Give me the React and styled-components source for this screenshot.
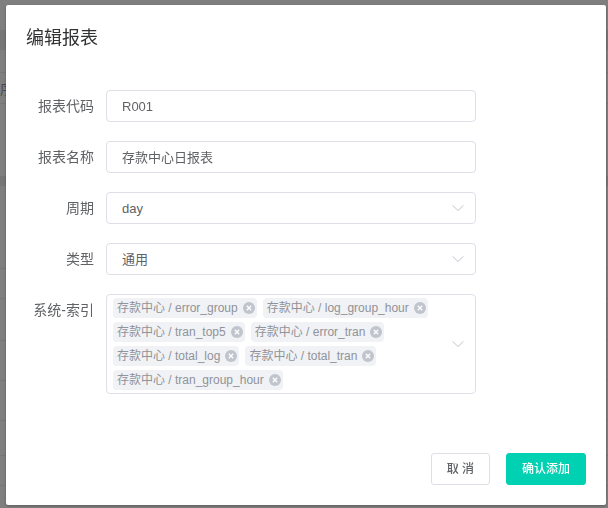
import React from "react";
import styled, { createGlobalStyle } from "styled-components";

const GlobalStyle = createGlobalStyle`
  html, body { margin: 0; padding: 0; }
  body {
    width: 608px;
    height: 508px;
    overflow: hidden;
    background: #ffffff;
    font-family: "Liberation Sans", "Noto Sans CJK SC", sans-serif;
  }
`;

/* ---------- background page (under the overlay) ---------- */
const Page = styled.div`
  display: flex;
  flex-direction: column;
  width: 608px;
  height: 508px;
  background: #ffffff;
`;

const PageRow = styled.div`
  height: ${(p) => p.$h}px;
  box-sizing: border-box;
  background: ${(p) => (p.$band ? "#ececec" : "transparent")};
  border-bottom: ${(p) => (p.$line ? "1px solid #ebeef5" : "none")};
  display: flex;
  align-items: center;
  font-size: 14px;
  color: #909399;
`;

const pageRows = [
  { h: 30 },
  { h: 20, band: true },
  { h: 23, line: true },
  { h: 31, line: true, text: "序号" },
  { h: 72 },
  { h: 10, band: true },
  { h: 83, line: true },
  { h: 30, line: true },
  { h: 42, line: true },
  { h: 40, line: true },
  { h: 40, line: true },
  { h: 35, line: true },
  { h: 30, line: true },
];

/* ---------- overlay & dialog ---------- */
const Overlay = styled.div`
  position: fixed;
  inset: 0;
  background: rgba(0, 0, 0, 0.5);
  display: flex;
  align-items: flex-start;
  padding: 5px 0 0 6px;
  box-sizing: border-box;
`;

const Dialog = styled.div`
  width: 600px;
  background: #ffffff;
  border-radius: 2px;
  box-shadow: 0 1px 3px rgba(0, 0, 0, 0.3);
  display: flex;
  flex-direction: column;
`;

const Header = styled.div`
  padding: 20px 20px 10px;
  height: 25px;
  display: flex;
  align-items: center;
`;

const Title = styled.span`
  font-size: 18px;
  line-height: 24px;
  color: #303133;
`;

const Body = styled.div`
  padding: 30px 20px;
`;

const FormItem = styled.div`
  display: flex;
  align-items: flex-start;
  margin-bottom: 19px;
`;

const Label = styled.label`
  width: 80px;
  height: 32px;
  box-sizing: border-box;
  padding-right: 12px;
  display: flex;
  align-items: center;
  justify-content: flex-end;
  font-size: 14px;
  line-height: 16px;
  color: #606266;
  flex-shrink: 0;
`;

const Field = styled.div`
  position: relative;
  width: 370px;
  height: 32px;
  box-sizing: border-box;
  border: 1px solid #dcdfe6;
  border-radius: 4px;
  padding: 0 30px 0 15px;
  display: flex;
  align-items: center;
  font-size: 13px;
  line-height: 15px;
  color: #606266;
  background: #ffffff;
`;

const MultiField = styled.div`
  position: relative;
  width: 370px;
  box-sizing: border-box;
  border: 1px solid #dcdfe6;
  border-radius: 4px;
  padding: 1px 30px 1px 0;
  display: flex;
  flex-wrap: wrap;
  align-content: flex-start;
  background: #ffffff;
`;

const Arrow = styled.span`
  position: absolute;
  right: 11px;
  top: 50%;
  transform: translateY(-50%);
  display: flex;
  width: 12px;
  height: 7px;
`;

const Tag = styled.span`
  display: inline-flex;
  align-items: center;
  height: 20px;
  margin: 2px 0 2px 6px;
  padding: 0 2px 0 4px;
  box-sizing: border-box;
  background: #f0f2f5;
  border-radius: 4px;
  font-size: 12px;
  line-height: 14px;
  color: #909399;
  white-space: nowrap;
`;

const TagClose = styled.span`
  display: inline-flex;
  margin-left: 5px;
  width: 12px;
  height: 12px;
`;

const Footer = styled.div`
  padding: 10px 20px 20px;
  display: flex;
  justify-content: flex-end;
  gap: 16px;
`;

const Button = styled.button`
  height: 32px;
  box-sizing: border-box;
  padding: 0 15px;
  border-radius: 3px;
  font-family: "Liberation Sans", "Noto Sans CJK SC", sans-serif;
  font-size: 12px;
  line-height: 14px;
  font-weight: 500;
  cursor: pointer;
  border: 1px solid ${(p) => (p.$primary ? "#00d1b2" : "#dcdfe6")};
  background: ${(p) => (p.$primary ? "#00d1b2" : "#ffffff")};
  color: ${(p) => (p.$primary ? "#ffffff" : "#606266")};
`;

const Chevron = () => (
  <Arrow>
    <svg width="12" height="7" viewBox="0 0 12 7">
      <polyline
        points="0.5,0.8 6,6 11.5,0.8"
        fill="none"
        stroke="#c0c4cc"
        strokeWidth="1"
      />
    </svg>
  </Arrow>
);

const CloseIcon = () => (
  <TagClose>
    <svg width="12" height="12" viewBox="0 0 12 12">
      <circle cx="6" cy="6" r="6" fill="#c0c4cc" />
      <path d="M3.8 3.8 L8.2 8.2 M8.2 3.8 L3.8 8.2" stroke="#ffffff" strokeWidth="1.3" />
    </svg>
  </TagClose>
);

const tags = [
  "存款中心 / error_group",
  "存款中心 / log_group_hour",
  "存款中心 / tran_top5",
  "存款中心 / error_tran",
  "存款中心 / total_log",
  "存款中心 / total_tran",
  "存款中心 / tran_group_hour",
];

export default function App() {
  return (
    <>
      <GlobalStyle />
      <Page>
        {pageRows.map((r, i) => (
          <PageRow key={i} $h={r.h} $band={r.band} $line={r.line}>
            {r.text}
          </PageRow>
        ))}
      </Page>
      <Overlay>
        <Dialog>
          <Header>
            <Title>编辑报表</Title>
          </Header>
          <Body>
            <FormItem>
              <Label>报表代码</Label>
              <Field>R001</Field>
            </FormItem>
            <FormItem>
              <Label>报表名称</Label>
              <Field>存款中心日报表</Field>
            </FormItem>
            <FormItem>
              <Label>周期</Label>
              <Field>
                day
                <Chevron />
              </Field>
            </FormItem>
            <FormItem>
              <Label>类型</Label>
              <Field>
                通用
                <Chevron />
              </Field>
            </FormItem>
            <FormItem>
              <Label>系统-索引</Label>
              <MultiField>
                {tags.map((t) => (
                  <Tag key={t}>
                    {t}
                    <CloseIcon />
                  </Tag>
                ))}
                <Chevron />
              </MultiField>
            </FormItem>
          </Body>
          <Footer>
            <Button>取 消</Button>
            <Button $primary>确认添加</Button>
          </Footer>
        </Dialog>
      </Overlay>
    </>
  );
}
